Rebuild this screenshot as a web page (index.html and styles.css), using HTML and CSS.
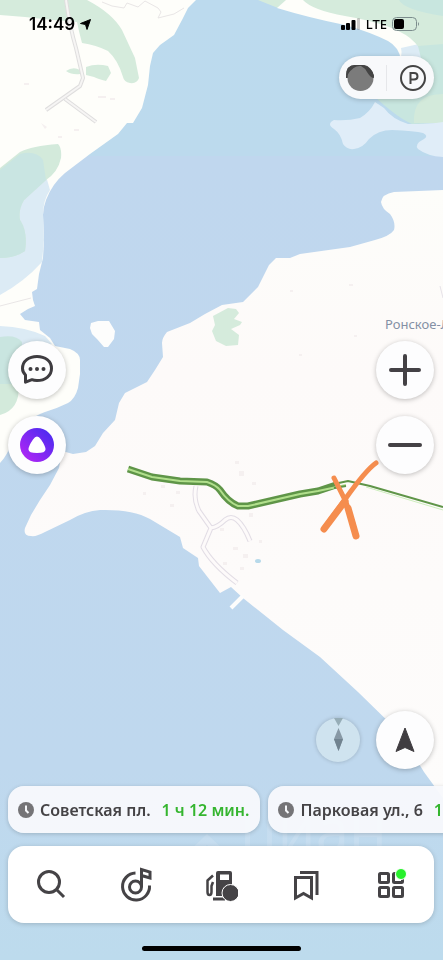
FILE: index.html
```
<!DOCTYPE html>
<html lang="ru">
<head>
  <meta charset="UTF-8">
  <meta name="viewport" content="width=device-width, initial-scale=1">
  <title>Карта</title>
  <link rel="stylesheet" href="styles.css">
</head>
<body>
  <svg class="map" viewBox="0 0 443 960" preserveAspectRatio="xMidYMid slice" aria-hidden="true">
    <defs>
      <linearGradient id="water" x1="0" y1="0" x2="0" y2="1">
        <stop offset="0" stop-color="#bcdaee"/>
        <stop offset="0.162" stop-color="#bcdaed"/>
        <stop offset="0.163" stop-color="#c0d7ee"/>
        <stop offset="0.8" stop-color="#bfd8ee"/>
        <stop offset="1" stop-color="#bddbed"/>
      </linearGradient>
      <linearGradient id="land" gradientUnits="userSpaceOnUse" x1="0" y1="190" x2="0" y2="800">
        <stop offset="0" stop-color="#fdfdfa"/>
        <stop offset="0.3" stop-color="#fdfaf9"/>
        <stop offset="1" stop-color="#fdfcfb"/>
      </linearGradient>
    </defs>
    <rect width="443" height="960" fill="url(#water)"/>

    <!-- north-west shore -->
    <path fill="#fefefa" d="M0 0H196L188 8L182 20L174 35L160 45L153 53L150 66L148 85L142 108L133 123L127 123L118 134L90 154L65 173Q52 184 46 200Q43 208 43 215L44 240L43 258L39 274L37 289L32 292L33 300L35 306L28 309L20 314L25 320L39 322L40 330L50 338L55 346L70 349Q80 353 80 360L80 374L78 388Q75 399 68 403Q58 408 45 412Q22 420 12 442Q7 456 0 463Z"/>
    <path fill="#d5ebdc" d="M0 0H87Q112 13 122 30L135 58L139 78Q137 84 130 83Q124 82 123 77Q118 60 108 51Q96 45 82 43Q79 32 77 22Q50 20 25 17L0 15Z"/>
    <path fill="#d5ebdc" d="M66 71Q73 66 80 70V74Q72 75 66 71ZM86 67Q96 63 108 66L111 73L106 81Q98 79 94 77L86 75Z"/>
    <path fill="#dcebf5" d="M46 176L50 190Q43 200 43 215L44 240L42 262Q24 282 0 295V240H18V200Z"/>
    <path fill="#d3eadb" d="M0 168L20 152Q32 146 58 144Q62 148 61 158Q58 172 46 180L24 200Q18 210 20 220Q28 232 25 251Q15 258 0 258Z"/>
    <path fill="#c9e5e2" d="M0 170L20 154Q36 150 43 160L46 180L24 200Q18 210 20 220Q28 232 25 251Q15 258 0 258Z"/>
    <path fill="#dcebf5" d="M0 326Q26 327 45 336L52 344L20 350L0 345Z"/>
    <path fill="#c9e5e0" d="M0 337Q16 334 22 342L20 390H0Z"/>
    <path fill="#d3eadb" d="M0 384H19Q20 410 0 415Z"/>
    <g fill="none" stroke="#dfdede" stroke-width="4" stroke-linejoin="round">
      <path d="M66 0Q70 28 76 48L83 78L80 86L46 110M65 99L96 122"/>
      <path stroke="#f6f5f4" stroke-width="2" d="M66 0Q70 28 76 48L83 78L80 86L46 110M65 99L96 122"/>
      <path stroke="#e9e6e6" stroke-width="1" d="M102 2L112 6L124 8L127 3L138 7L145 1L158 8L161 12L158 18L174 14L184 8M0 306L31 298"/>
    </g>

    <!-- north-east shore -->
    <path fill="#d5ebdc" d="M258 0H300L278 8Z"/>
    <path fill="#fefefa" d="M277 8L286 0H310L443 30V60H401Q399 47 388 41Q370 32 345 25Q310 18 277 8Z"/>
    <path fill="#dcebf5" d="M401 48L419 44L430 62H398Q403 56 401 48Z"/>
    <path fill="#d5ebdc" d="M303 0Q312 10 345 16Q392 24 410 38Q422 48 425 60H443V0Z"/>
    <path fill="#c8e6df" d="M399 0Q404 10 443 16V0ZM418 46L443 44V123L412 124Q398 118 376 98L424 70Z"/>
    <path fill="#d3eadb" d="M443 94Q412 94 414 123H443Z"/>
    <path fill="#e0edf8" d="M375 102Q370 112 360 118Q348 121 334 120Q326 124 334 129Q341 134 343 144Q347 150 354 149Q363 148 369 139Q378 130 392 130Q415 131 423 133Q429 136 424 139Q414 144 418 149Q427 156 443 157V122Q430 124 408 124Q392 119 384 108Z"/>

    <!-- cape -->
    <path fill="url(#land)" d="M443 190L394 192Q382 194 381 202Q382 209 390 214Q396 222 394 230Q390 236 375 240L350 247L300 254L290 258H276L269 265L258 287L243 302L222 305L205 314L190 323L167 332Q162 338 162 343L163 357L155 370L147 382L125 393L119 403L115 420L103 433L95 446L86 452L73 454L62 451L59 468L50 485L40 500L31 515L25 528Q23 536 31 536Q36 537 45 532L70 520Q85 511 100 510Q132 509 150 519L180 537L183 548L198 558L199 566L220 593L231 587L243 598L283 630L320 657L358 692L400 733L424 772L443 798Z"/>
    <path fill="#fdfdfc" d="M91 323L98 321H109L115 331L114 339L108 347L104 347L97 339L92 334L90 328Z"/>
    <path stroke="#fdfdfc" stroke-width="4" d="M243 596L231 608"/>
    <path fill="#d5ebdc" d="M213 316L228 308L236 309L239 313L234 319L242 322L240 325L231 329L239 335L238 345L226 346L216 341L212 331L215 325Z"/>
    <g fill="none" stroke="#e2dde5" stroke-width="5" stroke-linejoin="round">
      <path d="M196 486Q193 499 199 511L211 528L203 547Q212 564 237 583M211 528Q218 527 225 520Q231 515 237 520Q244 526 250 541"/>
      <path stroke="#fdfafa" stroke-width="3" d="M196 486Q193 499 199 511L211 528L203 547Q212 564 237 583M211 528Q218 527 225 520Q231 515 237 520Q244 526 250 541"/>
      <path stroke="#e6e2e8" stroke-width="1" d="M440 286L443 298"/>
    </g>
    <g fill="#f5f0f0">
      <path d="M235 461h4v3h-4zM239 471h5v5h-5zM252 482h4v3h-4zM143 492h3v3h-3zM161 485h4v3h-4zM176 491h4v3h-4zM170 504h4v3h-4zM249 513h4v4h-4zM220 528h4v3h-4zM233 547h5v3h-5zM243 554h5v4h-5zM223 562h4v3h-4zM240 567h4v3h-4zM259 540h3v3h-3zM290 290h3v2h-3zM349 284h4v2h-4zM354 335h3v2h-3zM299 354h3v2h-3z"/>
      <path d="M24 83h5v2h-5zM98 96h8v2h-8zM110 98h5v2h-5zM41 123l6 4-2 2zM74 129h5v2h-5zM58 136h4v2h-4z"/>
    </g>
    <ellipse cx="258" cy="561" rx="3" ry="2" fill="#b7d9ea"/>

    <text class="map-label" x="385" y="329">Ронское-Л</text>

    <!-- road -->
    <g fill="none" stroke-linejoin="round">
      <path stroke="#5f9548" stroke-width="7" d="M128 469L152 477L180 481L207 482Q216 485 220 490Q228 502 238 506H248L300 494L318 491L336 485"/>
      <path stroke="#b1df8c" stroke-width="2" d="M128 469L152 477L180 481L207 482Q216 485 220 490Q228 502 238 506H248L300 494L318 491L346 485"/>
      <path stroke="#5f9548" stroke-width="2" d="M334 484L348 481L370 486L443 507M334 488L346 486"/>
      <path stroke="#cdeebd" stroke-width="1" d="M366 487L443 510"/>
    </g>
    <g stroke="#f58d4e" stroke-linecap="round" fill="none">
      <path stroke-width="5" d="M334 478L346 502L353 524M376 463Q366 470 346 498L326 526"/>
      <path stroke-width="7" d="M348 508L356 536M345 501L324 529"/>
    </g>

    <g class="watermark">
      <path d="M188 852L207 834L226 852H214L207 845L199 852Z"/>
      <text x="240" y="852">циан</text>
    </g>
  </svg>

  <div class="app">
    <header class="status">
      <div class="status-group">
        <span class="clock">14:49</span>
        <svg width="11" height="11" viewBox="0 0 11 11"><path stroke="#000" stroke-linejoin="round" d="M10.500 .5L7 10.500L5.500 5.500L.5 4.500Z"/></svg>
      </div>
      <div class="status-group">
        <svg width="20" height="12" viewBox="0 0 20 12"><rect y="7" width="4" height="5" rx="1"/><rect x="5" y="5" width="4" height="7" rx="1"/><rect x="10.500" y="2" width="4" height="10" rx="1"/><rect x="16" width="3" height="12" rx="1" opacity=".2"/></svg>
        <span class="network">LTE</span>
        <svg width="28" height="14" viewBox="0 0 28 14"><rect x=".5" y=".5" width="24" height="13" rx="4" fill="none" stroke="#7b8c8c"/><rect x="2" y="2" width="10" height="10" rx="2"/><path d="M26 5Q28 7 26 9Z" fill="#7b8c8c"/></svg>
      </div>
    </header>

    <div class="layers">
      <button type="button" aria-label="Пробки">
        <svg width="28" height="26" viewBox="0 0 28 26"><path fill="#444" d="M0 11Q0 0 9 0H18Q25 1 28 11V13H0Z"/><circle cx="14.500" cy="13" r="13" fill="#7b7b7b"/><path fill="#444" d="M17 0Q26 2 28 11L27 13Q24 12 21 7Q19 3 15 1Q8 0 2 9L0 11Q0 0 9 0Z"/></svg>
      </button>
      <button type="button" aria-label="Парковки">
        <svg width="26" height="26" viewBox="0 0 26 26" fill="none" stroke="#444"><circle cx="13" cy="13" r="12" stroke-width="2"/><path stroke-width="2" d="M10.500 19V8H14Q17.500 8 17.500 11.300Q17.500 14.600 14 14.600H10.500"/></svg>
      </button>
    </div>

    <main class="controls">
      <div class="column">
        <button type="button" class="round" aria-label="Чат">
          <svg width="32" height="29" viewBox="0 0 32 29"><path fill="none" stroke="#3e3c40" stroke-width="3" stroke-linejoin="round" d="M4.500 20Q1.500 17 1.500 13.500C1.500 6 8 1.500 16 1.500S30.500 6 30.500 13.500S24 25.500 16 25.500Q13 25.500 11 24.700L4.500 27.200Z"/><g fill="#3e3c40"><circle cx="9.500" cy="14" r="2"/><circle cx="16" cy="14" r="2"/><circle cx="22.500" cy="14" r="2"/></g></svg>
        </button>
        <button type="button" class="round" aria-label="Алиса">
          <svg width="34" height="34" viewBox="0 0 34 34"><defs><linearGradient id="alice" x1="0" y1="1" x2="1" y2="0"><stop offset="0.100" stop-color="#b026f5"/><stop offset="0.900" stop-color="#4b2bf0"/></linearGradient></defs><circle cx="17" cy="17" r="17" fill="url(#alice)"/><path fill="#fff" d="M17 8.500Q19 8.500 21 11.500Q25.500 18 25.500 21.500Q25.500 25 17 25T8.500 21.500Q8.500 18 13 11.500Q15 8.500 17 8.500Z"/></svg>
        </button>
      </div>
      <div class="column">
        <button type="button" class="round" aria-label="Приблизить">
          <svg width="34" height="34" viewBox="0 0 34 34" stroke="#444145" stroke-width="4" stroke-linecap="round"><path d="M17 3V31M3 17H31"/></svg>
        </button>
        <button type="button" class="round" aria-label="Отдалить">
          <svg width="34" height="34" viewBox="0 0 34 34" stroke="#444145" stroke-width="4" stroke-linecap="round"><path d="M2 17H32"/></svg>
        </button>
      </div>
    </main>

    <div class="location">
      <button type="button" class="compass" aria-label="Компас">
        <svg width="44" height="44" viewBox="0 0 44 44"><path fill="#96adb7" d="M18 0H27L22.500 8Z"/><path fill="#8798a5" d="M22.500 10L27 21L22.500 33L18 21Z"/><path fill="#718390" d="M18 21H27L22.500 33Z"/></svg>
      </button>
      <button type="button" class="round" aria-label="Моё местоположение">
        <svg width="20" height="26" viewBox="0 0 20 26"><path fill="#403d41" stroke="#403d41" stroke-linejoin="round" d="M10 1L19 24.500L10 20.500L1 24.500Z"/></svg>
      </button>
    </div>

    <div class="routes">
      <a class="route" href="#">
        <svg width="16" height="16" viewBox="0 0 16 16"><circle cx="8" cy="8" r="8" fill="#757477"/><path d="M8 3.500V8.500L10.500 11" fill="none" stroke="#f6f7fa" stroke-width="2"/></svg>
        <span>Советская пл.</span>
        <span class="time">1 ч 12 мин.</span>
      </a>
      <a class="route" href="#">
        <svg width="16" height="16" viewBox="0 0 16 16"><circle cx="8" cy="8" r="8" fill="#757477"/><path d="M8 3.500V8.500L10.500 11" fill="none" stroke="#f6f7fa" stroke-width="2"/></svg>
        <span>Парковая ул., 6</span>
        <span class="time">1 ч 15 мин.</span>
      </a>
    </div>

    <nav class="tabs">
      <button type="button" aria-label="Поиск">
        <svg width="32" height="34" viewBox="0 0 32 34" fill="none" stroke="#454346" stroke-width="3"><circle cx="14" cy="14" r="10.500"/><path d="M21.500 21.500L29 29"/></svg>
      </button>
      <button type="button" aria-label="Музыка">
        <svg width="32" height="36" viewBox="0 0 32 36" fill="none" stroke="#454346" stroke-width="3"><path d="M15.500 6A13.500 13.500 0 1 0 29.500 18.500"/><circle cx="15.500" cy="20" r="6"/><path d="M21.500 20V2.500L30 5V11L21.500 8.500"/></svg>
      </button>
      <button type="button" aria-label="Заправки">
        <svg width="34" height="34" viewBox="0 0 34 34"><path fill="#454346" fill-rule="evenodd" d="M12 28V5Q12 3 14 3H26Q28 3 28 5V28ZM16 6.500V12H25V6.500Z"/><path fill="#454346" d="M9 29.500H21V32.500H9Z"/><path fill="none" stroke="#454346" stroke-width="2.500" stroke-linejoin="round" d="M9 7.500L3.500 12.500V24Q3.500 27 5.500 27T7.500 24V18L9 14"/><circle cx="26.500" cy="25" r="8.500" fill="#454346" stroke="#fff"/></svg>
      </button>
      <button type="button" aria-label="Закладки">
        <svg width="28" height="32" viewBox="0 0 28 32" fill="none" stroke="#454346" stroke-width="3"><path d="M3.500 8.500H19.500V29L11.500 24.500L3.500 29Z"/><path d="M8 3.500H25V26"/></svg>
      </button>
      <button type="button" aria-label="Меню">
        <svg width="28" height="30" viewBox="0 0 28 30" fill="none" stroke="#454346" stroke-width="3"><rect x="2.500" y="3.500" width="9" height="9" rx="1"/><rect x="16.500" y="3.500" width="9" height="9" rx="1"/><rect x="2.500" y="17.500" width="9" height="9" rx="1"/><rect x="16.500" y="17.500" width="9" height="9" rx="1"/></svg>
        <span class="dot"></span>
      </button>
    </nav>

    <div class="home-indicator"></div>
  </div>
</body>
</html>
```
FILE: styles.css
```
* {
  box-sizing: border-box;
}

body {
  margin: 0;
  font-family: "Noto Sans", "Open Sans", sans-serif;
  color: #454346;
  background: #bfd8ee;
}

button {
  display: flex;
  align-items: center;
  justify-content: center;
  padding: 0;
  border: none;
  background: none;
  cursor: pointer;
}

.map {
  position: fixed;
  inset: 0;
  width: 100%;
  height: 100%;
}

.map-label {
  font-size: 13px;
  fill: #8490a5;
}

.watermark {
  font-family: "Open Sans", sans-serif;
  font-size: 60px;
  fill: #fff;
  opacity: 0.12;
}

.app {
  position: relative;
  display: flex;
  flex-direction: column;
  min-height: 100vh;
  overflow: hidden;
}

/* status bar */
.status {
  display: flex;
  justify-content: space-between;
  height: 48px;
  padding: 0 23px 0 29px;
  color: #000;
}

.status-group {
  display: flex;
  align-items: center;
  gap: 5px;
}

.clock {
  font-family: Inter, sans-serif;
  font-size: 17px;
  font-weight: 600;
}

.network {
  font-size: 13px;
  font-weight: 500;
}

/* map controls */
.layers {
  display: flex;
  align-self: flex-end;
  width: 95px;
  height: 43px;
  margin: 8px 9px 0;
  border-radius: 22px;
  background: #f8f9fb;
  box-shadow: 0 1px 5px rgba(0, 0, 0, 0.2);
}

.layers button {
  flex: 1;
  padding-right: 4px;
}

.layers button + button {
  position: relative;
  padding: 0 0 0 6px;
}

.layers button + button::before {
  content: "";
  position: absolute;
  left: 0;
  width: 1px;
  height: 26px;
  background: #e6e7ea;
}

.controls {
  flex: 1;
  display: flex;
  justify-content: space-between;
  align-items: center;
  padding: 4px 9px 0 8px;
}

.column {
  display: flex;
  flex-direction: column;
  gap: 17px;
}

.round {
  width: 58px;
  height: 58px;
  border-radius: 50%;
  background: #fdfdfe;
  box-shadow: 0 1px 5px rgba(0, 0, 0, 0.25);
}

.location {
  display: flex;
  justify-content: flex-end;
  align-items: center;
  gap: 16px;
  padding: 0 9px;
}

.compass {
  width: 44px;
  height: 44px;
  border-radius: 50%;
  background: #cfe3ef;
  box-shadow: 0 0 4px rgba(0, 0, 0, 0.2);
}

/* recent routes */
.routes {
  display: flex;
  gap: 8px;
  margin-top: 11px;
  padding: 6px 8px;
  overflow: hidden;
}

.route {
  flex: none;
  display: flex;
  align-items: center;
  height: 47px;
  padding: 0 11px 0 10px;
  border-radius: 16px;
  background: rgba(248, 249, 252, 0.95);
  box-shadow: 0 1px 4px rgba(0, 0, 0, 0.18);
  color: inherit;
  font-size: 16px;
  font-weight: 600;
  text-decoration: none;
  white-space: nowrap;
}

.route svg {
  margin-right: 6px;
}

.time {
  margin-left: 11px;
  color: #35b52f;
}

/* bottom bar */
.tabs {
  display: flex;
  height: 77px;
  margin: 7px 9px 0 8px;
  border-radius: 16px;
  background: #fff;
  box-shadow: 0 1px 5px rgba(0, 0, 0, 0.18);
}

.tabs button {
  position: relative;
  flex: 1;
}

.dot {
  position: absolute;
  top: 22px;
  right: 27px;
  width: 12px;
  height: 12px;
  border: 1px solid #fff;
  border-radius: 50%;
  background: #27f02c;
}

.home-indicator {
  width: 36%;
  height: 5px;
  margin: 23px auto 9px;
  border-radius: 3px;
  background: #000;
}
```
